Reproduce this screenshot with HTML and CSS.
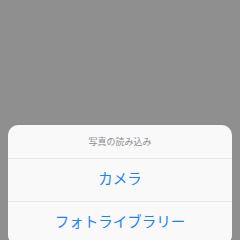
FILE: index.html
```html
<!DOCTYPE html>
<html lang="ja">
<head>
    <meta charset="UTF-8">
    <meta name="viewport" content="width=device-width, initial-scale=1.0">
    <title>写真の読み込み</title>
    <link rel="stylesheet" href="styles.css">
</head>
<body>
    <div class="overlay">
        <div class="action-sheet">
            <div class="sheet-title">写真の読み込み</div>
            <button class="sheet-btn">カメラ</button>
            <button class="sheet-btn">フォトライブラリー</button>
        </div>
    </div>
</body>
</html>
```

FILE: styles.css
```css
html, body {
    margin: 0;
    height: 100%;
    overflow: hidden;
}

body {
    font-family: "Noto Sans CJK JP", "Noto Sans", sans-serif;
    background-color: #8f8f8f;
}

.overlay {
    padding: 125px 8px 0;
}

.action-sheet {
    background-color: #f9f9f9;
    border-radius: 10px;
    display: flex;
    flex-direction: column;
}

.sheet-title {
    height: 33px;
    display: flex;
    align-items: center;
    justify-content: center;
    font-size: 9px;
    line-height: 1;
    color: #8e8e93;
    border-bottom: 1px solid #e6e6e6;
}

.sheet-btn {
    height: 43px;
    border: none;
    background: none;
    font-family: inherit;
    font-size: 14.5px;
    line-height: 1;
    color: #1a82fb;
    padding: 0 0 3px;
    border-bottom: 1px solid #e6e6e6;
}
```
